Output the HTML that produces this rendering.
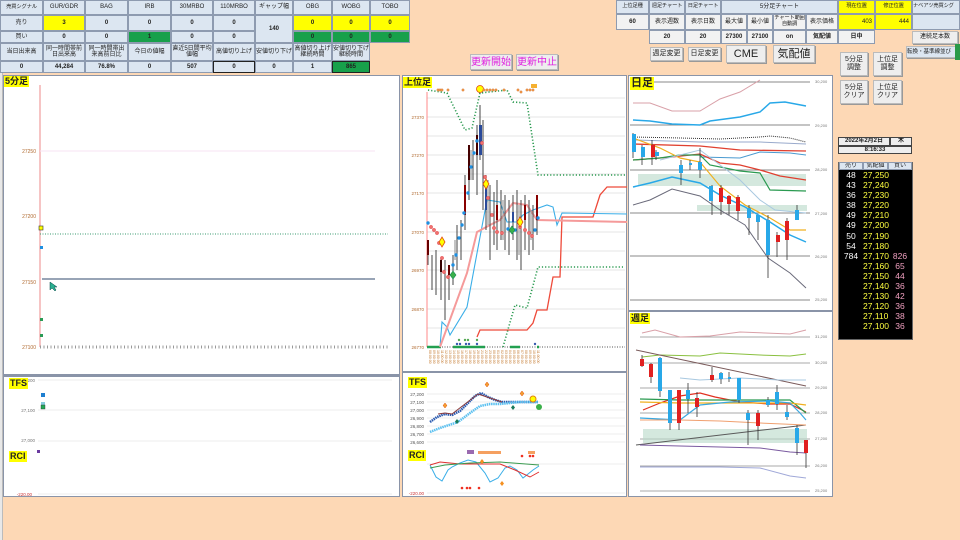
<!DOCTYPE html>
<html><head><meta charset="utf-8">
<style>
*{margin:0;padding:0;box-sizing:border-box}
body{width:960px;height:540px;background:#fdd8b5;position:relative;overflow:hidden;font-family:"Liberation Sans","Noto Sans CJK JP",sans-serif;font-size:6px;color:#222}
.c{position:absolute;border:1px solid #8e9bb0;background:#dce6f1;display:flex;align-items:center;justify-content:center;text-align:center;line-height:1.05;font-size:6px;overflow:hidden;white-space:nowrap}
.wr{white-space:normal}
.s{font-size:5.3px;letter-spacing:-.2px}
.b{font-weight:bold}
.y{background:#ffff00}
.g{background:#17a04b}
.w{background:#f2f2f2}
.btn{position:absolute;background:#eeeeee;border:1px solid #bbb;display:flex;align-items:center;justify-content:center;text-align:center;line-height:1.1;font-size:7px;box-shadow:1px 1px 0 #999}
.panel{position:absolute;background:#fff;border:1px solid #8a94a8}
.lbl{position:absolute;background:#ffff00;font-weight:bold;font-size:9px;padding:0 1px;line-height:11px}
svg{position:absolute;left:0;top:0}
</style></head><body>
<div style="position:absolute;left:0;top:0;width:3px;height:540px;background:#e8e8e8;border-right:1px solid #bbb"></div>

<div class="c s" style="left:0;top:0;width:43px;height:15px">売買シグナル</div>
<div class="c" style="left:43px;top:0;width:42px;height:15px">GUR/GDR</div>
<div class="c" style="left:85px;top:0;width:43px;height:15px">BAG</div>
<div class="c" style="left:128px;top:0;width:43px;height:15px">IRB</div>
<div class="c" style="left:171px;top:0;width:42px;height:15px">30MRBO</div>
<div class="c" style="left:213px;top:0;width:42px;height:15px">110MRBO</div>
<div class="c" style="left:255px;top:0;width:38px;height:15px">ギャップ幅</div>
<div class="c" style="left:293px;top:0;width:39px;height:15px">OBG</div>
<div class="c" style="left:332px;top:0;width:38px;height:15px">WOBG</div>
<div class="c" style="left:370px;top:0;width:40px;height:15px">TOBO</div>

<div class="c" style="left:0;top:15px;width:43px;height:16px">売り</div>
<div class="c b y" style="left:43px;top:15px;width:42px;height:16px">3</div>
<div class="c b" style="left:85px;top:15px;width:43px;height:16px">0</div>
<div class="c b" style="left:128px;top:15px;width:43px;height:16px">0</div>
<div class="c b" style="left:171px;top:15px;width:42px;height:16px">0</div>
<div class="c b" style="left:213px;top:15px;width:42px;height:16px">0</div>
<div class="c b" style="left:255px;top:15px;width:38px;height:28px">140</div>
<div class="c b y" style="left:293px;top:15px;width:39px;height:16px">0</div>
<div class="c b y" style="left:332px;top:15px;width:38px;height:16px">0</div>
<div class="c b y" style="left:370px;top:15px;width:40px;height:16px">0</div>

<div class="c" style="left:0;top:31px;width:43px;height:12px">買い</div>
<div class="c b" style="left:43px;top:31px;width:42px;height:12px">0</div>
<div class="c b" style="left:85px;top:31px;width:43px;height:12px">0</div>
<div class="c b g" style="left:128px;top:31px;width:43px;height:12px">1</div>
<div class="c b" style="left:171px;top:31px;width:42px;height:12px">0</div>
<div class="c b" style="left:213px;top:31px;width:42px;height:12px">0</div>
<div class="c b g" style="left:293px;top:31px;width:39px;height:12px">0</div>
<div class="c b g" style="left:332px;top:31px;width:38px;height:12px">0</div>
<div class="c b g" style="left:370px;top:31px;width:40px;height:12px">0</div>

<div class="c" style="left:0;top:43px;width:43px;height:18px">当日出来高</div>
<div class="c wr" style="left:43px;top:43px;width:42px;height:18px">同一時間帯前日出来高</div>
<div class="c wr" style="left:85px;top:43px;width:43px;height:18px">同一時間帯出来高前日比</div>
<div class="c" style="left:128px;top:43px;width:43px;height:18px">今日の値幅</div>
<div class="c wr" style="left:171px;top:43px;width:42px;height:18px">直近5日間平均値幅</div>
<div class="c" style="left:213px;top:43px;width:42px;height:18px">高値切り上げ</div>
<div class="c wr" style="left:255px;top:43px;width:38px;height:18px">安値切り下げ</div>
<div class="c wr" style="left:293px;top:43px;width:39px;height:18px">高値切り上げ継続時間</div>
<div class="c wr" style="left:332px;top:43px;width:38px;height:18px">安値切り下げ継続時間</div>

<div class="c b" style="left:0;top:61px;width:43px;height:12px">0</div>
<div class="c b" style="left:43px;top:61px;width:42px;height:12px">44,284</div>
<div class="c b" style="left:85px;top:61px;width:43px;height:12px">76.8%</div>
<div class="c b" style="left:128px;top:61px;width:43px;height:12px">0</div>
<div class="c b" style="left:171px;top:61px;width:42px;height:12px">507</div>
<div class="c b" style="left:213px;top:61px;width:42px;height:12px;border-color:#222">0</div>
<div class="c b" style="left:255px;top:61px;width:38px;height:12px">0</div>
<div class="c b" style="left:293px;top:61px;width:39px;height:12px">1</div>
<div class="c b g" style="left:332px;top:61px;width:38px;height:12px;border-color:#222">865</div>

<div class="btn" style="left:470px;top:54px;width:42px;height:16px;color:#e020e0;font-size:10px">更新開始</div>
<div class="btn" style="left:516px;top:54px;width:42px;height:16px;color:#e020e0;font-size:10px">更新中止</div>

<div class="c s" style="left:616px;top:0;width:33px;height:14px">上位足種</div>
<div class="c s" style="left:649px;top:0;width:36px;height:14px">週足チャート</div>
<div class="c s" style="left:685px;top:0;width:36px;height:14px">日足チャート</div>
<div class="c" style="left:721px;top:0;width:117px;height:14px">5分足チャート</div>
<div class="c y s" style="left:838px;top:0;width:37px;height:14px">現在位置</div>
<div class="c y s" style="left:875px;top:0;width:37px;height:14px">修正位置</div>
<div class="c s" style="left:912px;top:0;width:48px;height:14px;justify-content:flex-start">ナベアツ売買シグ</div>
<div class="c b w" style="left:616px;top:14px;width:33px;height:16px">60</div>
<div class="c w" style="left:649px;top:14px;width:36px;height:16px">表示週数</div>
<div class="c w" style="left:685px;top:14px;width:36px;height:16px">表示日数</div>
<div class="c w" style="left:721px;top:14px;width:26px;height:16px">最大値</div>
<div class="c w" style="left:747px;top:14px;width:26px;height:16px">最小値</div>
<div class="c w wr s" style="left:773px;top:14px;width:33px;height:16px">チャート範囲自動調</div>
<div class="c w" style="left:806px;top:14px;width:32px;height:16px">表示価格</div>
<div class="c y" style="left:838px;top:14px;width:37px;height:16px;justify-content:flex-end;padding-right:2px">403</div>
<div class="c y" style="left:875px;top:14px;width:37px;height:16px;justify-content:flex-end;padding-right:2px">444</div>
<div class="c" style="left:912px;top:14px;width:48px;height:16px"></div>
<div class="c b w" style="left:649px;top:30px;width:36px;height:14px">20</div>
<div class="c b w" style="left:685px;top:30px;width:36px;height:14px">20</div>
<div class="c b w" style="left:721px;top:30px;width:26px;height:14px">27300</div>
<div class="c b w" style="left:747px;top:30px;width:26px;height:14px">27100</div>
<div class="c b w" style="left:773px;top:30px;width:33px;height:14px">on</div>
<div class="c b w" style="left:806px;top:30px;width:32px;height:14px">気配値</div>
<div class="c b w" style="left:838px;top:30px;width:37px;height:14px">日中</div>
<div class="btn" style="left:912px;top:31px;width:46px;height:13px;font-size:6px">連続足本数</div>
<div class="btn" style="left:906px;top:46px;width:54px;height:12px;font-size:5.5px;background:#dce6f1;white-space:nowrap;justify-content:flex-start;overflow:hidden">転換・基準線並び</div>
<div style="position:absolute;left:955px;top:44px;width:5px;height:16px;background:#2a9a48"></div>

<div class="btn" style="left:650px;top:47px;width:33px;height:14px">週足変更</div>
<div class="btn" style="left:688px;top:47px;width:33px;height:14px">日足変更</div>
<div class="btn" style="left:726px;top:45px;width:40px;height:18px;font-size:11px">CME</div>
<div class="btn" style="left:773px;top:45px;width:42px;height:18px;font-size:11px">気配値</div>
<div class="btn" style="left:840px;top:52px;width:28px;height:24px">5分足<br>調整</div>
<div class="btn" style="left:873px;top:52px;width:29px;height:24px">上位足<br>調整</div>
<div class="btn" style="left:840px;top:80px;width:28px;height:24px">5分足<br>クリア</div>
<div class="btn" style="left:873px;top:80px;width:29px;height:24px">上位足<br>クリア</div>

<div class="c b" style="left:838px;top:137px;width:52px;height:9px;background:#eee;border-color:#444">2022年2月2日</div>
<div class="c b" style="left:890px;top:137px;width:22px;height:9px;background:#eee;border-color:#444">木</div>
<div class="c b" style="left:838px;top:146px;width:74px;height:8px;background:#eee;border-color:#444">8:16:33</div>
<div style="position:absolute;left:838px;top:162px;width:75px;height:178px;background:#000;border:1px solid #666"></div>
<div class="c" style="left:839px;top:162px;width:24px;height:8px;background:#dce6f1">売り</div>
<div class="c" style="left:863px;top:162px;width:25px;height:8px;background:#dce6f1">気配値</div>
<div class="c" style="left:888px;top:162px;width:24px;height:8px;background:#dce6f1">買い</div>

<div class="panel" style="left:3px;top:75px;width:397px;height:300px"></div>
<div class="panel" style="left:3px;top:375px;width:397px;height:122px;border-top:2px solid #8a94a8"></div>
<div class="panel" style="left:402px;top:75px;width:225px;height:297px"></div>
<div class="panel" style="left:402px;top:372px;width:225px;height:125px"></div>
<div class="panel" style="left:628px;top:75px;width:205px;height:236px"></div>
<div class="panel" style="left:628px;top:311px;width:205px;height:186px"></div>

<svg width="960" height="540" viewBox="0 0 960 540" font-family="Liberation Sans,sans-serif">
<g font-size="5" fill="#b06a30" text-anchor="end">
<text x="36" y="153">27250</text><text x="36" y="218">27200</text><text x="36" y="284">27150</text><text x="36" y="349">27100</text></g>
<line x1="40" y1="85" x2="40" y2="347" stroke="#e88" stroke-width="1"/>
<line x1="40" y1="151" x2="375" y2="151" stroke="#f7e3f3"/>
<line x1="40" y1="234" x2="388" y2="234" stroke="#3a9a70" stroke-dasharray="1,1.5"/>
<line x1="42" y1="279" x2="375" y2="279" stroke="#5a6e8a" stroke-width="1.2"/>
<line x1="40" y1="347" x2="390" y2="347" stroke="#999" stroke-dasharray="1,2.5" stroke-width="3"/>
<rect x="39" y="226" width="4" height="4" fill="#ff0" stroke="#333" stroke-width=".6"/>
<rect x="40" y="246" width="3" height="3" fill="#1e8fe0"/>
<rect x="40" y="318" width="3" height="3" fill="#2a9a55"/>
<rect x="40" y="334" width="3" height="3" fill="#2a9a55"/>
<path d="M50,282 l0,8 l2,-2 l3,3 l1,-1 l-2,-3 l3,0z" fill="#2ab090" stroke="#044" stroke-width=".5"/>
<g font-size="4.5" fill="#777" text-anchor="end"><text x="35" y="382">200</text><text x="35" y="412">27,100</text><text x="35" y="442">27,000</text></g>
<line x1="38" y1="380" x2="392" y2="380" stroke="#eee"/><line x1="38" y1="410" x2="392" y2="410" stroke="#eee"/><line x1="38" y1="441" x2="392" y2="441" stroke="#eee"/>
<rect x="41" y="393" width="4" height="4" fill="#1e7fd0"/><rect x="41" y="402" width="4" height="3" fill="#8cd"/><rect x="41" y="405" width="4" height="4" fill="#2a5" stroke="#333" stroke-width=".4"/>
<rect x="37" y="450" width="3" height="3" fill="#6a3aa0"/>
<text x="32" y="496" font-size="4.5" fill="#c33" text-anchor="end">-220.00</text>
<line x1="38" y1="494" x2="392" y2="494" stroke="#eee"/>

<g stroke="#e4e4e4"><line x1="427" y1="98" x2="625" y2="98"/><line x1="427" y1="117" x2="625" y2="117"/><line x1="427" y1="136" x2="625" y2="136"/><line x1="427" y1="155" x2="625" y2="155"/><line x1="427" y1="174" x2="625" y2="174"/><line x1="427" y1="193" x2="625" y2="193"/><line x1="427" y1="212" x2="625" y2="212"/><line x1="427" y1="232" x2="625" y2="232"/><line x1="427" y1="251" x2="625" y2="251"/><line x1="427" y1="270" x2="625" y2="270"/><line x1="427" y1="289" x2="625" y2="289"/><line x1="427" y1="309" x2="625" y2="309"/><line x1="427" y1="328" x2="625" y2="328"/></g>
<g font-size="4.5" fill="#b06a30" text-anchor="end"><text x="424" y="119">27370</text><text x="424" y="157">27270</text><text x="424" y="195">27170</text><text x="424" y="234">27070</text><text x="424" y="272">26970</text><text x="424" y="311">26870</text><text x="424" y="349">26770</text></g>
<line x1="427" y1="92" x2="427" y2="347" stroke="#f88"/>
<line x1="427" y1="347" x2="625" y2="347" stroke="#aaa" stroke-dasharray="1,1.5" stroke-width="2"/>
<g stroke="#22a050" stroke-width="2.5"><line x1="427" y1="347" x2="441" y2="347"/><line x1="453" y1="347" x2="485" y2="347"/><line x1="510" y1="347" x2="520" y2="347"/><line x1="537" y1="347" x2="539" y2="347"/></g>
<g fill="#c47a30" font-size="3.5">
<text transform="translate(429,350) rotate(90)">08:00:00</text><text transform="translate(433,350) rotate(90)">09:00:00</text><text transform="translate(437,350) rotate(90)">10:00:00</text><text transform="translate(441,350) rotate(90)">11:00:00</text><text transform="translate(445,350) rotate(90)">12:00:00</text><text transform="translate(449,350) rotate(90)">13:00:00</text><text transform="translate(453,350) rotate(90)">14:00:00</text><text transform="translate(457,350) rotate(90)">15:00:00</text><text transform="translate(461,350) rotate(90)">16:00:00</text><text transform="translate(465,350) rotate(90)">17:00:00</text><text transform="translate(469,350) rotate(90)">18:00:00</text><text transform="translate(473,350) rotate(90)">19:00:00</text><text transform="translate(477,350) rotate(90)">20:00:00</text><text transform="translate(481,350) rotate(90)">21:00:00</text><text transform="translate(485,350) rotate(90)">22:00:00</text><text transform="translate(489,350) rotate(90)">23:00:00</text><text transform="translate(493,350) rotate(90)">00:00:00</text><text transform="translate(497,350) rotate(90)">01:00:00</text><text transform="translate(501,350) rotate(90)">02:00:00</text><text transform="translate(505,350) rotate(90)">03:00:00</text><text transform="translate(509,350) rotate(90)">04:00:00</text><text transform="translate(513,350) rotate(90)">05:00:00</text><text transform="translate(517,350) rotate(90)">06:00:00</text><text transform="translate(521,350) rotate(90)">07:00:00</text><text transform="translate(525,350) rotate(90)">08:00:00</text><text transform="translate(529,350) rotate(90)">09:00:00</text><text transform="translate(533,350) rotate(90)">10:00:00</text><text transform="translate(537,350) rotate(90)">11:00:00</text></g>
<polyline points="428,90 447,93 465,130 472,128 480,93 507,90 513,102 527,103 538,175 627,175" fill="none" stroke="#2a9a50" stroke-width="1.6" stroke-dasharray="1.2,2"/>
<polyline points="503,347 515,305 527,308 538,267 623,267" fill="none" stroke="#2a9a50" stroke-width="1.6" stroke-dasharray="1.2,2"/>
<polyline points="477,337 480,330 527,330 533,323 537,310 547,310 553,277 560,277 562,217 593,217 600,195 607,187 627,187" fill="none" stroke="#ee4a3a" stroke-width="1.3"/>
<polyline points="440,347 442,322 447,327 450,335 467,307 480,237 487,200 500,202 507,222 517,222 523,215 533,210 547,205 553,207 557,225 562,213 627,214" fill="none" stroke="#3aaee8" stroke-width="1.1"/>
<polyline points="440,347 467,273 477,232 490,225 500,220 513,203 527,205 537,220 627,222" fill="none" stroke="#f59a9a" stroke-width="2"/>
<g stroke="#444" stroke-width="1">
<path d="M428,240v25M432,255v35M436,250v45M441,258v42M445,260v60M449,265v35M453,255v30M457,225v45M461,220v40M465,175v55M469,145v55M473,140v40M477,125v70M480,105v55M483,120v90M486,175v55M490,185v75M494,192v53M497,180v70M501,190v50M505,195v55M509,200v55M513,195v45M517,190v70M521,200v70M525,195v55M529,200v55M533,205v45M537,195v40"/></g>
<g stroke="#888" stroke-width="1"><path d="M455,240v20M471,150v30M488,180v45M503,200v40M519,205v50M531,210v30"/></g>
<g><rect x="427" y="240" width="2" height="15" fill="#600"/><rect x="440" y="260" width="2" height="12" fill="#300"/><rect x="448" y="265" width="2" height="10" fill="#600"/><rect x="464" y="185" width="2" height="30" fill="#800"/><rect x="468" y="145" width="2" height="35" fill="#400"/><rect x="479" y="125" width="3" height="30" fill="#2a4a9a"/><rect x="476" y="135" width="2" height="20" fill="#400"/><rect x="485" y="180" width="2" height="30" fill="#2a4a9a"/><rect x="496" y="205" width="2" height="15" fill="#800"/><rect x="512" y="212" width="2" height="10" fill="#2a4a9a"/><rect x="524" y="205" width="2" height="15" fill="#800"/><rect x="536" y="195" width="2" height="25" fill="#800"/></g>
<g fill="#f07070" stroke="#d44" stroke-width=".4"><circle cx="431" cy="227" r="1.7"/><circle cx="434" cy="230" r="1.7"/><circle cx="437" cy="233" r="1.7"/><circle cx="439" cy="243" r="1.7"/><circle cx="442" cy="258" r="1.7"/><circle cx="444" cy="272" r="1.7"/><circle cx="448" cy="277" r="1.7"/><circle cx="482" cy="143" r="1.7"/><circle cx="485" cy="177" r="1.7"/><circle cx="488" cy="198" r="1.7"/><circle cx="492" cy="215" r="1.7"/><circle cx="494" cy="228" r="1.7"/><circle cx="497" cy="232" r="1.7"/><circle cx="502" cy="233" r="1.7"/><circle cx="520" cy="227" r="1.7"/><circle cx="525" cy="230" r="1.7"/><circle cx="529" cy="233" r="1.7"/><circle cx="532" cy="236" r="1.7"/></g>
<g fill="#1e8fe0"><circle cx="428" cy="223" r="1.7"/><circle cx="453" cy="265" r="1.7"/><circle cx="456" cy="255" r="1.7"/><circle cx="459" cy="238" r="1.7"/><circle cx="462" cy="225" r="1.7"/><circle cx="464" cy="213" r="1.7"/><circle cx="468" cy="193" r="1.7"/><circle cx="471" cy="167" r="1.7"/><circle cx="474" cy="153" r="1.7"/><circle cx="477" cy="141" r="1.7"/><circle cx="508" cy="229" r="1.7"/><circle cx="515" cy="230" r="1.7"/><circle cx="535" cy="230" r="1.7"/><circle cx="538" cy="218" r="1.7"/></g>
<g fill="#ff0" stroke="#e04a10" stroke-width=".8"><path d="M442,237l3,5l-3,5l-3,-5z"/><path d="M486,179l3,5l-3,5l-3,-5z"/><path d="M520,217l3,5l-3,5l-3,-5z"/><circle cx="480" cy="89" r="3.5"/></g>
<path d="M453,271l3,4l-3,4l-3,-4z" fill="#3ab04a" stroke="#185" stroke-width=".6"/><path d="M512,226l3,4l-3,4l-3,-4z" fill="#3ab04a" stroke="#185" stroke-width=".6"/>
<g fill="#f5a050" stroke="#c62" stroke-width=".4"><circle cx="438" cy="90" r="1.2"/><circle cx="440" cy="90" r="1.2"/><circle cx="442" cy="90" r="1.2"/><circle cx="448" cy="90" r="1.2"/><circle cx="463" cy="90" r="1.2"/><circle cx="484" cy="90" r="1.2"/><circle cx="487" cy="90" r="1.2"/><circle cx="490" cy="90" r="1.2"/><circle cx="493" cy="90" r="1.2"/><circle cx="496" cy="90" r="1.2"/><circle cx="504" cy="90" r="1.2"/><circle cx="518" cy="90" r="1.2"/><circle cx="521" cy="92" r="1.2"/><circle cx="527" cy="90" r="1.2"/><circle cx="530" cy="90" r="1.2"/><circle cx="533" cy="90" r="1.2"/><rect x="531" y="84" width="6" height="4" fill="#f5b030" stroke="none"/></g>
<g fill="#3a5ab0"><circle cx="457" cy="344" r="1.2"/><circle cx="460" cy="344" r="1.2"/><circle cx="466" cy="344" r="1.2"/><circle cx="469" cy="344" r="1.2"/><circle cx="477" cy="344" r="1.2"/><circle cx="535" cy="344" r="1.2"/></g>
<g fill="#5a5" ><circle cx="459" cy="340" r="1.2"/><circle cx="465" cy="340" r="1.2"/><circle cx="468" cy="340" r="1.2"/><circle cx="477" cy="340" r="1.2"/></g>
<g font-size="4.5" fill="#555" text-anchor="end"><text x="424" y="396">27,200</text><text x="424" y="404">27,100</text><text x="424" y="412">27,000</text><text x="424" y="420">26,900</text><text x="424" y="428">26,800</text><text x="424" y="436">26,700</text><text x="424" y="444">26,600</text></g>
<g stroke="#eee"><line x1="427" y1="394" x2="625" y2="394"/><line x1="427" y1="402" x2="625" y2="402"/><line x1="427" y1="410" x2="625" y2="410"/><line x1="427" y1="418" x2="625" y2="418"/><line x1="427" y1="426" x2="625" y2="426"/><line x1="427" y1="434" x2="625" y2="434"/><line x1="427" y1="442" x2="625" y2="442"/></g>
<polyline points="430,422 437,417 445,414 452,415 460,411 468,403 475,396 481,393 488,397 495,400 502,402 520,402 538,402" fill="none" stroke="#2a5ab0" stroke-width="2.5" stroke-dasharray="1.5,.7"/>
<polyline points="438,414 445,413 452,414 478,394 490,398 502,402" fill="none" stroke="#8a3a3a" stroke-width="1"/>
<polyline points="430,432 440,428 458,422 470,413 480,406 490,404 500,404 520,402 538,402" fill="none" stroke="#5ac0f0" stroke-width="2.5" stroke-dasharray="1.5,.7"/>
<g fill="#f5a030" stroke="#e05010" stroke-width=".5"><path d="M445,403l2,2.5l-2,2.5l-2,-2.5z"/><path d="M487,382l2,2.5l-2,2.5l-2,-2.5z"/><path d="M522,391l2,2.5l-2,2.5l-2,-2.5z"/></g>
<circle cx="533" cy="399" r="3" fill="#ff0" stroke="#e08010"/><circle cx="539" cy="407" r="3" fill="#3ab04a"/>
<path d="M457,419l2,2.5l-2,2.5l-2,-2.5zM513,405l2,2.5l-2,2.5l-2,-2.5z" fill="#1a7a5a"/>
<g stroke="#eee"><line x1="427" y1="464" x2="625" y2="464"/><line x1="427" y1="493" x2="625" y2="493"/></g>
<text x="424" y="495" font-size="4.5" fill="#c33" text-anchor="end">-220.00</text>
<rect x="467" y="450" width="7" height="4" fill="#9a6ab0"/><rect x="478" y="451" width="23" height="3" fill="#f5a060"/><rect x="528" y="451" width="7" height="3" fill="#f5a060"/>
<polyline points="430,465 436,477 442,481 448,470 452,467 460,463 468,460 476,462 485,473 490,482 498,478 505,468 510,466 517,470 523,478 533,470 539,466" fill="none" stroke="#3aaee8" stroke-width="1"/>
<polyline points="430,465 440,462 460,464 480,464 500,464 515,470 530,477 539,472" fill="none" stroke="#e03030" stroke-width="1"/>
<polyline points="430,468 445,465 470,463 500,462 539,465" fill="none" stroke="#3a9a50" stroke-width="1"/>
<g fill="#ee3020"><circle cx="462" cy="488" r="1.3"/><circle cx="467" cy="488" r="1.3"/><circle cx="470" cy="488" r="1.3"/><circle cx="479" cy="488" r="1.3"/><circle cx="522" cy="456" r="1.3"/><circle cx="530" cy="456" r="1.3"/><circle cx="533" cy="456" r="1.3"/></g>
<path d="M482,459l2,2.5l-2,2.5l-2,-2.5zM502,481l2,2.5l-2,2.5l-2,-2.5z" fill="#f59020"/>

<g stroke="#888"><line x1="630" y1="82" x2="810" y2="82"/><line x1="630" y1="125" x2="810" y2="125"/><line x1="630" y1="170" x2="810" y2="170"/><line x1="630" y1="213" x2="810" y2="213"/><line x1="630" y1="256" x2="810" y2="256"/><line x1="630" y1="300" x2="810" y2="300"/></g>
<g font-size="4" fill="#777"><text x="815" y="83">30,200</text><text x="815" y="127">29,200</text><text x="815" y="171">28,200</text><text x="815" y="215">27,200</text><text x="815" y="258">26,200</text><text x="815" y="301">25,200</text></g>
<polyline points="633,103 650,103 672,111 700,111 720,99 740,92 760,80" fill="none" stroke="#d9a0a8"/>
<polyline points="633,120 650,121 672,124 700,125 710,121 740,117 760,112 770,103 785,102 806,106" fill="none" stroke="#28a8e8" stroke-width="1.5"/>
<rect x="638" y="174" width="168" height="12" fill="#b8d8c8" opacity=".6"/>
<rect x="697" y="205" width="110" height="6" fill="#b8d8c8" opacity=".6"/>
<polyline points="633,137 680,138 720,139 760,137 770,136 790,138 806,142" fill="none" stroke="#333" stroke-dasharray="1,1"/>
<polyline points="633,140 700,142 760,142 806,144" fill="none" stroke="#9ac" />
<polyline points="633,144 700,146 740,150 806,151" fill="none" stroke="#e04030" stroke-width="1.3"/>
<polyline points="700,157 740,158 760,152 790,153 806,155" fill="none" stroke="#4a9ad0"/>
<polyline points="633,160 672,157 700,154 720,163 740,165 760,170 780,176 806,180" fill="none" stroke="#e04030" stroke-width="1.3"/>
<polyline points="633,160 660,158 680,155 700,155 710,165 740,171 760,173 770,190 806,191" fill="none" stroke="#2a9a50" stroke-width="1.2"/>
<polyline points="633,138 660,148 680,158 700,162 720,186 745,205 770,218 790,230 806,230" fill="none" stroke="#f0b020" stroke-width="1.2"/>
<polyline points="633,187 650,183 672,177 700,183 720,195 745,207 770,222 790,235 806,242" fill="none" stroke="#28a8e8" stroke-width="1.5"/>
<polyline points="633,205 650,200 672,189 700,196 720,210 745,225 768,258 790,273 806,288" fill="none" stroke="#6a6a7a"/>
<polyline points="660,160 700,150 740,180 760,200 775,210 806,213" fill="none" stroke="#a8c8e0"/>
<g stroke="#333" stroke-width=".8"><path d="M633,133v25M642,145v20M652,140v25M656,150v10M681,160v25M690,160v10M700,148v30M712,185v30M721,185v30M729,195v20M738,195v25M749,205v30M758,215v25M768,215v63M777,232v25M787,218v42M797,205v15"/></g>
<g><rect x="632" y="134" width="4" height="18" fill="#28a8e8"/><rect x="641" y="147" width="4" height="10" fill="#28a8e8"/><rect x="651" y="145" width="4" height="12" fill="#e02020"/><rect x="655" y="152" width="4" height="4" fill="#28a8e8"/><rect x="679" y="165" width="4" height="8" fill="#28a8e8"/><rect x="689" y="163" width="3" height="2" fill="#28a8e8"/><rect x="698" y="162" width="4" height="8" fill="#28a8e8"/><rect x="709" y="186" width="4" height="15" fill="#28a8e8"/><rect x="719" y="188" width="4" height="14" fill="#e02020"/><rect x="727" y="196" width="4" height="8" fill="#e02020"/><rect x="736" y="197" width="4" height="14" fill="#e02020"/><rect x="747" y="208" width="4" height="10" fill="#28a8e8"/><rect x="756" y="215" width="4" height="7" fill="#28a8e8"/><rect x="766" y="220" width="4" height="35" fill="#28a8e8"/><rect x="776" y="235" width="4" height="7" fill="#e02020"/><rect x="785" y="221" width="4" height="19" fill="#e02020"/><rect x="795" y="210" width="4" height="10" fill="#28a8e8"/></g>
<g stroke="#aaa"><line x1="640" y1="337" x2="810" y2="337"/><line x1="640" y1="363" x2="810" y2="363"/><line x1="640" y1="388" x2="810" y2="388"/><line x1="640" y1="413" x2="810" y2="413"/><line x1="640" y1="439" x2="810" y2="439"/><line x1="640" y1="466" x2="810" y2="466"/><line x1="640" y1="491" x2="810" y2="491"/></g>
<g font-size="4" fill="#777"><text x="815" y="338">31,200</text><text x="815" y="364">30,200</text><text x="815" y="389">29,200</text><text x="815" y="414">28,200</text><text x="815" y="440">27,200</text><text x="815" y="467">26,200</text><text x="815" y="492">25,200</text></g>
<rect x="643" y="429" width="164" height="14" fill="#b8d8c8" opacity=".6"/>
<polyline points="642,333 655,330 680,337 710,336 740,332 790,334 806,330" fill="none" stroke="#d9a0a8"/>
<polyline points="642,357 660,355 700,356 720,353 760,355 790,356 806,354" fill="none" stroke="#8ac040"/>
<line x1="636" y1="350" x2="806" y2="386" stroke="#7a5a5a" stroke-width="1"/>
<line x1="636" y1="445" x2="806" y2="425" stroke="#5a5a5a" stroke-width="1"/>
<polyline points="680,378 700,380 740,378 780,380 806,380" fill="none" stroke="#a8c8e0"/>
<polyline points="643,410 660,403 680,396 700,393 715,397 740,402 770,404 790,404 806,412" fill="none" stroke="#e03020" stroke-width="1.2"/>
<polyline points="640,399 680,400 720,400 760,400 790,400 806,413" fill="none" stroke="#2a9a50" stroke-width="1.2"/>
<polyline points="640,402 680,403 720,403 760,403 790,403 806,405" fill="none" stroke="#f0b020" stroke-width="1.2"/>
<polyline points="640,418 680,420 700,405 730,402 770,401 790,403 800,413 806,420" fill="none" stroke="#3aa8e0" stroke-width="1.2"/>
<polyline points="640,420 680,420 720,421 760,423 806,425" fill="none" stroke="#f0a070"/>
<polyline points="640,445 680,446 720,447 760,448 790,452 806,453" fill="none" stroke="#7a5aa0"/>
<polyline points="640,467 680,467 720,467 760,468 790,476 806,478" fill="none" stroke="#a0a8d8"/>
<g stroke="#333" stroke-width=".8"><path d="M642,355v12M651,363v20M660,357v40M670,390v40M679,390v40M688,383v30M697,392v25M712,367v15M721,372v12M729,372v10M739,378v25M748,410v35M758,410v30M768,397v10M777,385v25M787,405v15M797,425v30M806,443v25"/></g>
<g><rect x="640" y="359" width="4" height="7" fill="#e02020"/><rect x="649" y="364" width="4" height="13" fill="#e02020"/><rect x="658" y="358" width="4" height="33" fill="#28a8e8"/><rect x="668" y="390" width="4" height="33" fill="#28a8e8"/><rect x="677" y="390" width="4" height="33" fill="#e02020"/><rect x="686" y="390" width="4" height="9" fill="#28a8e8"/><rect x="695" y="398" width="4" height="9" fill="#e02020"/><rect x="710" y="375" width="4" height="5" fill="#e02020"/><rect x="719" y="373" width="4" height="6" fill="#28a8e8"/><rect x="728" y="377" width="3" height="2" fill="#28a8e8"/><rect x="737" y="378" width="4" height="22" fill="#28a8e8"/><rect x="746" y="413" width="4" height="7" fill="#28a8e8"/><rect x="756" y="413" width="4" height="13" fill="#e02020"/><rect x="766" y="400" width="4" height="5" fill="#28a8e8"/><rect x="775" y="392" width="4" height="12" fill="#28a8e8"/><rect x="785" y="412" width="4" height="5" fill="#28a8e8"/><rect x="795" y="428" width="4" height="15" fill="#28a8e8"/><rect x="804" y="440" width="4" height="13" fill="#e02020"/></g>
</svg>

<div class="lbl" style="left:4px;top:76px">5分足</div>
<div class="lbl" style="left:9px;top:378px">TFS</div>
<div class="lbl" style="left:9px;top:451px">RCI</div>
<div class="lbl" style="left:403px;top:77px">上位足</div>
<div class="lbl" style="left:408px;top:377px">TFS</div>
<div class="lbl" style="left:408px;top:450px">RCI</div>
<div class="lbl" style="left:630px;top:77px;font-size:11px;line-height:13px">日足</div>
<div class="lbl" style="left:630px;top:313px">週足</div>

<div style="position:absolute;left:839px;top:170px;width:73px;font-size:8.5px;line-height:10.1px">
<div style="display:flex"><span style="width:24px;text-align:center;color:#fff">48</span><span style="width:25px;text-align:center;color:#ffff40">27,250</span><span style="width:24px"></span></div>
<div style="display:flex"><span style="width:24px;text-align:center;color:#fff">43</span><span style="width:25px;text-align:center;color:#ffff40">27,240</span><span style="width:24px"></span></div>
<div style="display:flex"><span style="width:24px;text-align:center;color:#fff">36</span><span style="width:25px;text-align:center;color:#ffff40">27,230</span><span style="width:24px"></span></div>
<div style="display:flex"><span style="width:24px;text-align:center;color:#fff">38</span><span style="width:25px;text-align:center;color:#ffff40">27,220</span><span style="width:24px"></span></div>
<div style="display:flex"><span style="width:24px;text-align:center;color:#fff">49</span><span style="width:25px;text-align:center;color:#ffff40">27,210</span><span style="width:24px"></span></div>
<div style="display:flex"><span style="width:24px;text-align:center;color:#fff">49</span><span style="width:25px;text-align:center;color:#ffff40">27,200</span><span style="width:24px"></span></div>
<div style="display:flex"><span style="width:24px;text-align:center;color:#fff">50</span><span style="width:25px;text-align:center;color:#ffff40">27,190</span><span style="width:24px"></span></div>
<div style="display:flex"><span style="width:24px;text-align:center;color:#fff">54</span><span style="width:25px;text-align:center;color:#ffff40">27,180</span><span style="width:24px"></span></div>
<div style="display:flex"><span style="width:24px;text-align:center;color:#fff">784</span><span style="width:25px;text-align:center;color:#ffff40">27,170</span><span style="width:24px;text-align:center;color:#f0a0c0">826</span></div>
<div style="display:flex"><span style="width:24px"></span><span style="width:25px;text-align:center;color:#ffff40">27,160</span><span style="width:24px;text-align:center;color:#f0a0c0">65</span></div>
<div style="display:flex"><span style="width:24px"></span><span style="width:25px;text-align:center;color:#ffff40">27,150</span><span style="width:24px;text-align:center;color:#f0a0c0">44</span></div>
<div style="display:flex"><span style="width:24px"></span><span style="width:25px;text-align:center;color:#ffff40">27,140</span><span style="width:24px;text-align:center;color:#f0a0c0">36</span></div>
<div style="display:flex"><span style="width:24px"></span><span style="width:25px;text-align:center;color:#ffff40">27,130</span><span style="width:24px;text-align:center;color:#f0a0c0">42</span></div>
<div style="display:flex"><span style="width:24px"></span><span style="width:25px;text-align:center;color:#ffff40">27,120</span><span style="width:24px;text-align:center;color:#f0a0c0">36</span></div>
<div style="display:flex"><span style="width:24px"></span><span style="width:25px;text-align:center;color:#ffff40">27,110</span><span style="width:24px;text-align:center;color:#f0a0c0">38</span></div>
<div style="display:flex"><span style="width:24px"></span><span style="width:25px;text-align:center;color:#ffff40">27,100</span><span style="width:24px;text-align:center;color:#f0a0c0">36</span></div>
</div>
</body></html>
